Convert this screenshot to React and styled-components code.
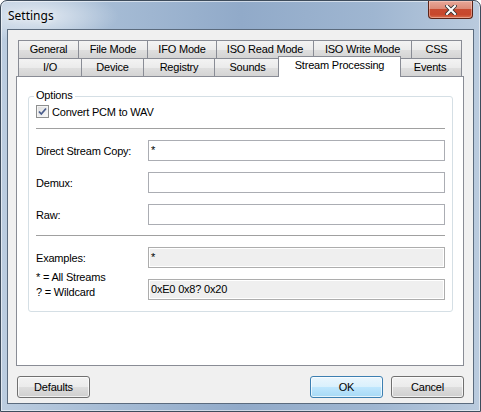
import React from "react";
import styled, { createGlobalStyle } from "styled-components";

const GlobalStyle = createGlobalStyle`
  html, body {
    margin: 0;
    padding: 0;
    background: #fff;
  }
  body {
    font-family: "Liberation Sans", Arial, sans-serif;
    font-size: 11px;
    color: #000;
  }
`;

const backTabs = [
  { label: "General", w: 61 },
  { label: "File Mode", w: 70 },
  { label: "IFO Mode", w: 70 },
  { label: "ISO Read Mode", w: 98 },
  { label: "ISO Write Mode", w: 99 },
  { label: "CSS", w: 51 },
];

const frontTabs = [
  { label: "I/O", w: 64 },
  { label: "Device", w: 63 },
  { label: "Registry", w: 72 },
  { label: "Sounds", w: 67 },
  { label: "Stream Processing", w: 119, active: true },
  { label: "Events", w: 64 },
];

export default function App() {
  return (
    <>
      <GlobalStyle />
      <Window>
        <TitleBar>
          <Title>Settings</Title>
          <CloseButton aria-label="Close">
            <svg width="12" height="10" viewBox="0 0 12 10">
              <path d="M2 1 L10 9 M10 1 L2 9" stroke="#333" strokeWidth="3.8" strokeLinecap="square" />
              <path d="M2 1 L10 9 M10 1 L2 9" stroke="#fff" strokeWidth="2.1" strokeLinecap="square" />
            </svg>
          </CloseButton>
        </TitleBar>
        <Client>
          <TabArea>
            <TabRow>
              {backTabs.map((t) => (
                <Tab key={t.label} $w={t.w}>
                  {t.label}
                </Tab>
              ))}
            </TabRow>
            <TabRow $front>
              {frontTabs.map((t) => (
                <Tab key={t.label} $w={t.w} $active={t.active}>
                  {t.label}
                </Tab>
              ))}
            </TabRow>
            <Panel>
              <Group>
                <Legend>Options</Legend>
                <CheckRow>
                  <CheckBox>
                    <svg width="11" height="11" viewBox="0 0 11 11">
                      <path d="M2 5.5 L4.3 8 L9 2.5" fill="none" stroke="#4a5d8c" strokeWidth="1.8" />
                    </svg>
                  </CheckBox>
                  <CheckLabel>Convert PCM to WAV</CheckLabel>
                </CheckRow>
                <Separator />
                <FieldRow>
                  <Label>Direct Stream Copy:</Label>
                  <Field>*</Field>
                </FieldRow>
                <FieldRow>
                  <Label>Demux:</Label>
                  <Field />
                </FieldRow>
                <FieldRow>
                  <Label>Raw:</Label>
                  <Field />
                </FieldRow>
                <Separator />
                <FieldRow>
                  <Label>Examples:</Label>
                  <Field $disabled>*</Field>
                </FieldRow>
                <FieldRow>
                  <Hint>
                    <div>* = All Streams</div>
                    <div>? = Wildcard</div>
                  </Hint>
                  <Field $disabled>0xE0 0x8? 0x20</Field>
                </FieldRow>
              </Group>
            </Panel>
          </TabArea>
          <ButtonRow>
            <Button>Defaults</Button>
            <Spacer />
            <Button $primary>OK</Button>
            <Button>Cancel</Button>
          </ButtonRow>
        </Client>
      </Window>
    </>
  );
}

const Window = styled.div`
  box-sizing: border-box;
  width: 481px;
  height: 412px;
  display: flex;
  flex-direction: column;
  padding: 0 6px 7px 6px;
  border: 1px solid #3e4c5c;
  border-radius: 7px 7px 0 0;
  box-shadow: inset 0 0 0 1px rgba(255, 255, 255, 0.55);
  background:
    radial-gradient(ellipse 80px 26px at 38px 15px, rgba(255, 255, 255, 0.6), rgba(255, 255, 255, 0)),
    linear-gradient(90deg, #bccde0 0%, #a6bcd5 22%, #91aac9 50%, #9fb6d1 78%, #bacbde 100%);
`;

const TitleBar = styled.div`
  height: 28px;
  display: flex;
  align-items: center;
  flex-shrink: 0;
`;

const Title = styled.span`
  padding-left: 1px;
  margin-top: 1px;
  font-family: "Noto Sans", "Open Sans", sans-serif;
  font-size: 12px;
  color: #000;
  text-shadow: 0 0 6px rgba(255, 255, 255, 0.9);
`;

const CloseButton = styled.div`
  box-sizing: border-box;
  margin-left: auto;
  margin-right: 1px;
  align-self: flex-start;
  width: 45px;
  height: 18px;
  display: flex;
  align-items: center;
  justify-content: center;
  border: 1px solid #5b2418;
  border-top: none;
  border-radius: 0 0 4px 4px;
  background: linear-gradient(#e8a899 0%, #dc8b78 45%, #c84a30 50%, #c7472c 80%, #d8704f 100%);
  box-shadow: inset 0 0 0 1px rgba(255, 220, 210, 0.45);
`;

const Client = styled.div`
  flex: 1;
  display: flex;
  flex-direction: column;
  background: #f0f0f0;
  border: 1px solid #5b6b7e;
`;

const TabArea = styled.div`
  width: 448px;
  margin: 10px 0 0 8px;
`;

const TabRow = styled.div`
  display: flex;
  align-items: flex-start;
  padding-left: 2px;
  margin-top: ${(p) => (p.$front ? "-1px" : "0")};
`;

const Tab = styled.div`
  box-sizing: border-box;
  position: relative;
  z-index: ${(p) => (p.$active ? 2 : 1)};
  flex-shrink: 0;
  width: ${(p) => (p.$active ? p.$w + 4 : p.$w)}px;
  height: ${(p) => (p.$active ? 21 : 19)}px;
  margin-left: ${(p) => (p.$active ? -3 : -1)}px;
  margin-right: ${(p) => (p.$active ? -2 : 0)}px;
  margin-top: ${(p) => (p.$active ? -2 : 0)}px;
  padding-top: 2px;
  border: 1px solid #898c95;
  border-bottom: ${(p) => (p.$active ? "none" : "1px solid #898c95")};
  background: ${(p) =>
    p.$active
      ? "#fff"
      : "linear-gradient(#f3f3f3, #ebebeb 50%, #dfdfdf 51%, #d4d4d4)"};
  text-align: center;
  line-height: 13px;
  letter-spacing: -0.2px;
  white-space: nowrap;

  &:first-child {
    margin-left: 0;
  }
`;

const Panel = styled.div`
  box-sizing: border-box;
  position: relative;
  z-index: 1;
  height: 290px;
  margin-top: -1px;
  border: 1px solid #898c95;
  background: #fff;
  padding: 19px 0 0 11px;
`;

const Group = styled.div`
  box-sizing: border-box;
  position: relative;
  width: 425px;
  height: 216px;
  padding: 8px 7px 0 7px;
  border: 1px solid #d5dfe5;
  border-radius: 3px;
  display: flex;
  flex-direction: column;
`;

const Legend = styled.span`
  position: absolute;
  top: -9px;
  left: 5px;
  padding: 0 2px;
  background: #fff;
  line-height: 15px;
  letter-spacing: -0.2px;
`;

const CheckRow = styled.div`
  display: flex;
  align-items: center;
  height: 13px;
`;

const CheckBox = styled.div`
  box-sizing: border-box;
  width: 13px;
  height: 13px;
  display: flex;
  align-items: center;
  justify-content: center;
  border: 1px solid #8e8f8f;
  background: linear-gradient(135deg, #dcdcdc, #fbfbfb);
  box-shadow: inset 0 0 0 1px #f4f4f4;
`;

const CheckLabel = styled.span`
  margin-left: 3px;
  letter-spacing: -0.2px;
`;

const Separator = styled.div`
  height: 1px;
  margin-top: 10px;
  background: #a0a0a0;
  flex-shrink: 0;
`;

const FieldRow = styled.div`
  display: grid;
  grid-template-columns: 112px 297px;
  align-items: center;
  height: 21px;
  margin-top: 11px;
`;

const Label = styled.span`
  letter-spacing: -0.2px;
`;

const Hint = styled.div`
  align-self: start;
  margin-top: -9px;
  line-height: 15px;
  letter-spacing: -0.2px;
`;

const Field = styled.div`
  box-sizing: border-box;
  height: 21px;
  padding: 0 2px;
  border: 1px solid ${(p) => (p.$disabled ? "#adadad" : "#abadb3")};
  background: ${(p) => (p.$disabled ? "#efefef" : "#fff")};
  box-shadow: ${(p) => (p.$disabled ? "inset 0 0 0 1px #fff" : "none")};
  line-height: 19px;
  letter-spacing: -0.2px;
`;

const ButtonRow = styled.div`
  display: flex;
  gap: 8px;
  padding: 0 9px;
  margin-top: 10px;
`;

const Spacer = styled.div`
  flex: 1;
`;

const Button = styled.div`
  box-sizing: border-box;
  width: 73px;
  height: 22px;
  display: flex;
  align-items: center;
  justify-content: center;
  border: 1px solid ${(p) => (p.$primary ? "#3c7fb1" : "#707070")};
  border-radius: 3px;
  background: ${(p) =>
    p.$primary
      ? "linear-gradient(#eaf6fd, #d9f0fc 50%, #bee6fd 51%, #a7d9f5)"
      : "linear-gradient(#f2f2f2, #ebebeb 50%, #dddddd 51%, #cfcfcf)"};
  box-shadow: inset 0 0 0 1px rgba(255, 255, 255, 0.7);
  letter-spacing: -0.2px;
`;
